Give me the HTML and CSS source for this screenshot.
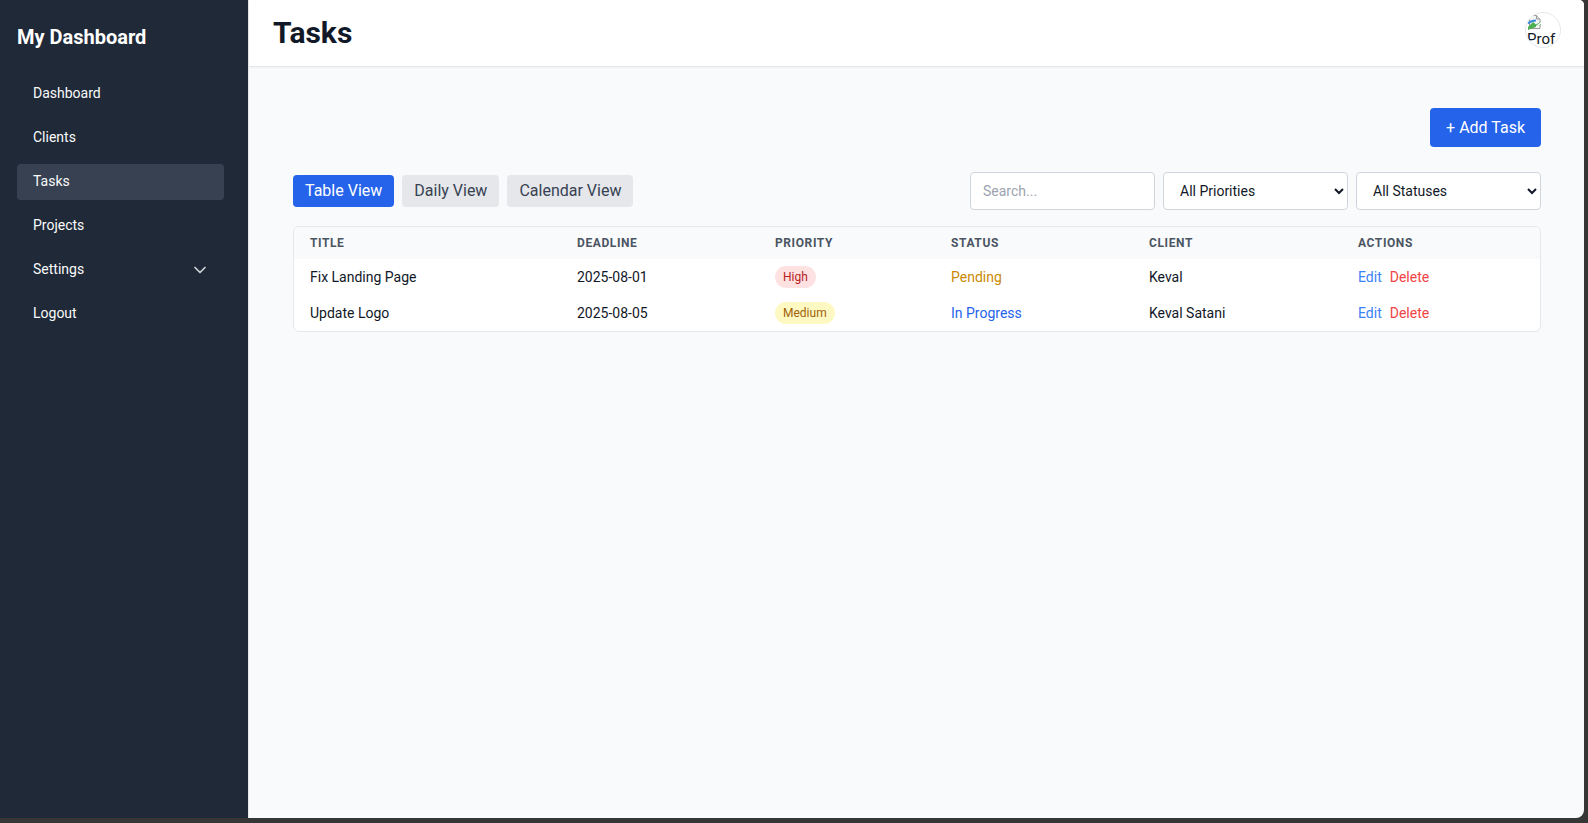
FILE: index.html
```html
<!DOCTYPE html>
<html lang="en">
<head>
<meta charset="utf-8">
<title>Tasks</title>
<link rel="stylesheet" href="styles.css">
</head>
<body>
<div class="app">
  <aside class="sidebar">
    <h1 class="brand">My Dashboard</h1>
    <nav class="nav">
      <a class="nav-item">Dashboard</a>
      <a class="nav-item">Clients</a>
      <a class="nav-item active">Tasks</a>
      <a class="nav-item">Projects</a>
      <a class="nav-item nav-toggle">Settings
        <svg class="chev" width="20" height="20" viewBox="0 0 24 24" fill="none" stroke="currentColor" stroke-width="2" stroke-linecap="round" stroke-linejoin="round"><path d="M6 9l6 6 6-6"/></svg>
      </a>
      <a class="nav-item">Logout</a>
    </nav>
  </aside>
  <main class="main">
    <header class="topbar">
      <h2 class="page-title">Tasks</h2>
      <div class="avatar" title="Profile">
        <svg class="broken" width="16" height="16" viewBox="0 0 16 16">
          <path d="M2.5 1.5h7l3.5 3.5v9.5h-10.5z" fill="#f4f4f4" stroke="#9a9a9a" stroke-width="1"/>
          <path d="M9.5 1.5v3.5h3.5" fill="#e0e0e0" stroke="#9a9a9a" stroke-width="1"/>
          <path d="M1 13l5-5 3 2.5 5-3v3.5l-13 5z" fill="#4caf50"/>
          <path d="M1 9.5c2-2 5-3 8-3" stroke="#3b8fd9" stroke-width="2" fill="none"/>
          <path d="M9 14l6-5v-2l-6 5z" fill="#ffffff"/>
        </svg>
        <span class="alt">Prof</span>
      </div>
    </header>
    <section class="content">
      <div class="actions-row">
        <button class="btn-primary">+ Add Task</button>
      </div>
      <div class="toolbar">
        <div class="views">
          <button class="view-btn active">Table View</button>
          <button class="view-btn">Daily View</button>
          <button class="view-btn">Calendar View</button>
        </div>
        <div class="filters">
          <input class="field" type="text" placeholder="Search...">
          <select class="field">
            <option>All Priorities</option>
          </select>
          <select class="field">
            <option>All Statuses</option>
          </select>
        </div>
      </div>
      <div class="table-wrap">
        <table class="tasks">
          <thead>
            <tr>
              <th class="c-title">Title</th>
              <th class="c-deadline">Deadline</th>
              <th class="c-priority">Priority</th>
              <th class="c-status">Status</th>
              <th class="c-client">Client</th>
              <th class="c-actions">Actions</th>
            </tr>
          </thead>
          <tbody>
            <tr>
              <td>Fix Landing Page</td>
              <td>2025-08-01</td>
              <td><span class="badge high">High</span></td>
              <td class="st-pending">Pending</td>
              <td>Keval</td>
              <td><a class="act edit">Edit</a><a class="act del">Delete</a></td>
            </tr>
            <tr>
              <td>Update Logo</td>
              <td>2025-08-05</td>
              <td><span class="badge medium">Medium</span></td>
              <td class="st-progress">In Progress</td>
              <td>Keval Satani</td>
              <td><a class="act edit">Edit</a><a class="act del">Delete</a></td>
            </tr>
          </tbody>
        </table>
      </div>
    </section>
  </main>
</div>
</body>
</html>
```
FILE: styles.css
```css
* { box-sizing: border-box; }

html, body {
  margin: 0;
  height: 100%;
  background: #363636;
}

body {
  font-family: Roboto, "Liberation Sans", Arial, sans-serif;
  color: #111827;
  overflow: hidden;
}

.app {
  width: 1584px;
  height: 818px;
  display: flex;
  overflow: hidden;
  border-radius: 0 5px 8px 0;
  background: #f9fafb;
}

/* Sidebar */
.sidebar {
  width: 248px;
  flex: none;
  background: #1f2937;
  color: #ffffff;
  padding: 23px 24px 16px 17px;
}

.brand {
  margin: 0 0 25px 0;
  font-size: 20px;
  line-height: 28px;
  font-weight: 700;
  color: #ffffff;
}

.nav {
  display: flex;
  flex-direction: column;
  gap: 8px;
}

.nav-item {
  display: flex;
  align-items: center;
  justify-content: space-between;
  height: 36px;
  padding: 0 14px 2px 16px;
  border-radius: 4px;
  font-size: 14px;
  color: #f9fafb;
  cursor: pointer;
}

.nav-item.active {
  background: #374151;
}

.chev {
  color: #d1d5db;
  margin-top: 2px;
}

/* Main */
.main {
  flex: 1;
  display: flex;
  flex-direction: column;
  border-left: 1px solid #e5e7eb;
  min-width: 0;
}

.topbar {
  height: 67px;
  flex: none;
  background: #ffffff;
  border-bottom: 1px solid #e5e7eb;
  box-shadow: 0 1px 2px rgba(0, 0, 0, 0.04);
  display: flex;
  justify-content: space-between;
  align-items: flex-start;
  padding: 0 23px 0 24px;
}

.page-title {
  margin: 15px 0 0 0;
  font-size: 30px;
  line-height: 36px;
  font-weight: 700;
  color: #111827;
}

.avatar {
  margin-top: 12px;
  width: 36px;
  height: 36px;
  border-radius: 50%;
  border: 1px solid #e5e7eb;
  overflow: hidden;
  background: #ffffff;
  padding: 0 0 0 1px;
}

.broken {
  display: block;
  margin-top: 1px;
}

.alt {
  display: block;
  font-size: 15px;
  line-height: 16px;
  margin-top: 1px;
  color: #111827;
  white-space: nowrap;
}

/* Content */
.content {
  flex: 1;
  padding: 41px 43px 0 44px;
}

.actions-row {
  display: flex;
  justify-content: flex-end;
}

.btn-primary {
  font-family: inherit;
  font-size: 16px;
  line-height: 23px;
  padding: 8px 16px;
  height: 39px;
  border: none;
  border-radius: 4px;
  background: #2563eb;
  color: #ffffff;
  cursor: pointer;
}

.toolbar {
  margin-top: 25px;
  display: flex;
  justify-content: space-between;
  align-items: center;
}

.views {
  display: flex;
  gap: 8px;
}

.view-btn {
  font-family: inherit;
  font-size: 16px;
  line-height: 24px;
  height: 32px;
  padding: 4px 12px;
  border: none;
  border-radius: 4px;
  background: #e5e7eb;
  color: #374151;
  cursor: pointer;
}

.view-btn.active {
  background: #2563eb;
  color: #ffffff;
}

.filters {
  display: flex;
  gap: 8px;
}

.field {
  width: 185px;
  height: 38px;
  border: 1px solid #d1d5db;
  border-radius: 4px;
  background: #ffffff;
  font-family: inherit;
  font-size: 14px;
  color: #111827;
  padding: 0 12px;
}

select.field {
  padding: 0 8px 0 12px;
}

.field::placeholder {
  color: #9ca3af;
}

/* Table */
.table-wrap {
  margin-top: 16px;
  border: 1px solid #e5e7eb;
  border-radius: 6px;
  overflow: hidden;
  background: #ffffff;
}

.tasks {
  width: 100%;
  border-collapse: collapse;
  table-layout: fixed;
}

.tasks th {
  background: #f9fafb;
  height: 32px;
  padding: 0 16px;
  text-align: left;
  font-size: 12px;
  font-weight: 700;
  text-transform: uppercase;
  letter-spacing: 0.05em;
  color: #4b5563;
}

.c-title { width: 267px; }
.c-deadline { width: 198px; }
.c-priority { width: 176px; }
.c-status { width: 198px; }
.c-client { width: 209px; }

.tasks td {
  height: 36px;
  padding: 0 16px;
  font-size: 14px;
  color: #111827;
  vertical-align: middle;
}

.badge {
  display: inline-block;
  padding: 0 8px;
  height: 22px;
  line-height: 22px;
  border-radius: 999px;
  font-size: 12px;
}

.badge.high {
  background: #fee2e2;
  color: #b91c1c;
}

.badge.medium {
  background: #fef9c3;
  color: #a16207;
}

.st-pending { color: #ca8a04 !important; }
.st-progress { color: #2563eb !important; }

.act {
  cursor: pointer;
  margin-right: 8px;
}

.act.edit { color: #3b82f6; }
.act.del { color: #ef4444; }
```
